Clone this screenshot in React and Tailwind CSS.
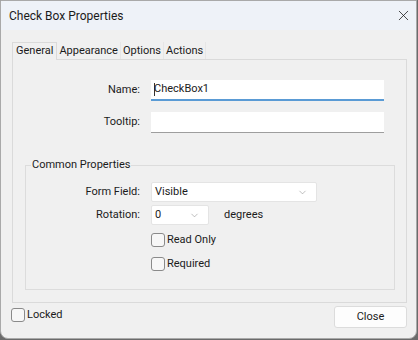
import { X, ChevronDown } from 'lucide-react';

const font = { fontFamily: '"Segoe UI", Roboto, "Liberation Sans", sans-serif' };

function Check({ label }) {
  return (
    <label className="flex items-center gap-[2px] h-[20px] text-[11px] text-[#1b1b1b]">
      <span className="w-[14px] h-[14px] rounded-[3px] border border-[#8a8a8a] bg-[#f7f7f7]"></span>
      <span>{label}</span>
    </label>
  );
}

function Select({ value, width }) {
  return (
    <div className={"flex items-center justify-between h-[20px] bg-white border border-[#e4e4e4] rounded-[2px] pl-[3px] pr-[8px] text-[11px] text-[#1b1b1b] " + width}>
      <span>{value}</span>
      <ChevronDown size={11} strokeWidth={1.2} className="text-[#8a8a8a]" />
    </div>
  );
}

export default function App() {
  const tabs = ['General', 'Appearance', 'Options', 'Actions'];
  return (
    <div style={font} className="w-[418px] h-[340px] bg-[#6b6b6b] overflow-hidden">
      <div className="w-[417px] h-[339px] bg-[#f0f0f0] border border-[#a9a9a9] rounded-b-[8px] overflow-hidden flex flex-col">
        {/* title bar */}
        <div className="h-[29px] bg-[#eef2f8] flex items-center justify-between pl-[8px] pr-[4px]">
          <span className="text-[12px] text-[#1b1b1b]">Check Box Properties</span>
          <X size={17} strokeWidth={1.1} className="text-[#1b1b1b]" />
        </div>

        {/* tabs */}
        <div className="flex pl-[11px] pt-[11px] h-[29px] items-end">
          {tabs.map((t, i) => (
            <div
              key={t}
              className={i === 0
                ? "h-[18px] px-[3px] bg-[#f0f0f0] border border-b-0 border-[#dadada] text-[11px] text-[#1b1b1b] leading-[16px] relative z-10 -mb-px"
                : "h-[17px] px-[2px] bg-[#f0f0f0] border-r border-[#e6e6e6] text-[11px] text-[#1b1b1b] leading-[17px]"}
            >
              {t}
            </div>
          ))}
        </div>

        {/* panel */}
        <div className="ml-[11px] mr-[9px] h-[244px] border border-[#dadada] flex flex-col">
          <div className="flex flex-col gap-[11px] pt-[20px]">
            <div className="flex items-center h-[21px]">
              <span className="w-[127px] text-right text-[11px] text-[#1b1b1b]">Name:</span>
              <div className="ml-[11px] w-[233px] h-[21px] bg-white border-b-2 border-[#5a9bd5] flex items-center pl-[3px] text-[11px] text-[#1b1b1b]">
                <span className="w-px h-[13px] bg-[#333] mr-[-1px]"></span>CheckBox1
              </div>
            </div>
            <div className="flex items-center h-[21px]">
              <span className="w-[127px] text-right text-[11px] text-[#1b1b1b]">Tooltip:</span>
              <div className="ml-[11px] w-[233px] h-[21px] bg-white border-b border-[#9e9e9e]"></div>
            </div>
          </div>

          {/* group box */}
          <div className="relative mt-[32px] ml-[12px] mr-[11px] h-[125px] border border-[#dcdcdc] pt-[16px]">
            <span className="absolute left-[5px] top-[-9px] bg-[#f0f0f0] px-px text-[11px] text-[#1b1b1b]">Common Properties</span>
            <div className="flex flex-col">
              <div className="flex items-center h-[20px]">
                <span className="w-[114px] text-right text-[11px] text-[#1b1b1b]">Form Field:</span>
                <div className="ml-[11px]"><Select value="Visible" width="w-[166px]" /></div>
              </div>
              <div className="flex items-center h-[20px] mt-[3px]">
                <span className="w-[114px] text-right text-[11px] text-[#1b1b1b]">Rotation:</span>
                <div className="ml-[11px]"><Select value="0" width="w-[58px]" /></div>
                <span className="ml-[15px] text-[11px] text-[#1b1b1b]">degrees</span>
              </div>
              <div className="ml-[125px] mt-[5px] flex flex-col gap-[4px]">
                <Check label="Read Only" />
                <Check label="Required" />
              </div>
            </div>
          </div>
        </div>

        {/* footer */}
        <div className="flex items-center justify-between pl-[10px] pr-[9px] mt-[3px]">
          <div className="-mt-[4px]"><Check label="Locked" /></div>
          <div className="w-[73px] h-[22px] bg-[#fdfdfd] border border-[#dcdcdc] rounded-[3px] flex items-center justify-center text-[11px] text-[#1b1b1b]">
            Close
          </div>
        </div>
      </div>
    </div>
  );
}
